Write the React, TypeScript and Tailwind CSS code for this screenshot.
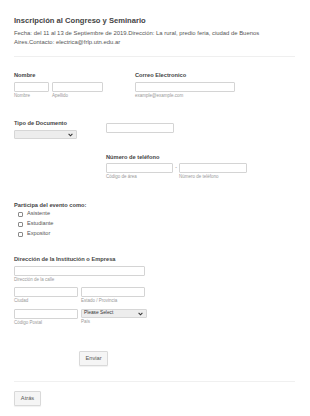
import React from 'react';

function Field({ w, h = 10 }: { w: number; h?: number }) {
  return (
    <div
      className="bg-white border border-[#d4d4d4] rounded-[1px] shrink-0"
      style={{ width: w, height: h }}
    />
  );
}

function Sub({ children }: { children: React.ReactNode }) {
  return <div className="mt-[1px] h-[6px] leading-[6px] text-[4.5px] text-[#999] whitespace-nowrap">{children}</div>;
}

function Label({ children }: { children: React.ReactNode }) {
  return <div className="h-[8px] leading-[8px] text-[5.7px] font-bold text-[#444] whitespace-nowrap">{children}</div>;
}

function Chevron() {
  return (
    <svg width="5" height="4" viewBox="0 0 5 4" className="shrink-0">
      <path d="M0.6 0.9 L2.5 2.8 L4.4 0.9" fill="none" stroke="#333" strokeWidth="1.1" />
    </svg>
  );
}

function SelectBox({ w, h, text }: { w: number; h: number; text?: string }) {
  return (
    <div
      className="flex items-center justify-between bg-[#ededed] border border-[#d6d6d6] rounded-[1px] pl-[2px] pr-[3px]"
      style={{ width: w, height: h }}
    >
      <span className="text-[4.8px] text-[#333] leading-none whitespace-nowrap">{text}</span>
      <Chevron />
    </div>
  );
}

function Check({ label }: { label: string }) {
  return (
    <div className="h-[10px] flex items-center pl-[4px] gap-[4px]">
      <div className="w-[5px] h-[5px] border border-[#8a8a8a] rounded-[1px] bg-white" />
      <span className="text-[5.6px] text-[#555] leading-none">{label}</span>
    </div>
  );
}

export default function App() {
  return (
    <div className="w-[310px] h-[416px] bg-white overflow-hidden font-['Liberation_Sans',Arial,sans-serif] px-[14px] pt-[16px] pr-[15px]">
      <h1 className="h-[10px] leading-[10px] text-[7.6px] font-bold text-[#444]">
        Inscripción al Congreso y Seminario
      </h1>
      <p className="mt-[3px] text-[5.9px] leading-[9px] text-[#555]">
        Fecha: del 11 al 13 de Septiembre de 2019.Dirección: La rural, predio feria, ciudad de Buenos Aires.Contacto: electrica@frlp.utn.edu.ar
      </p>
      <div className="mt-[9px] border-t border-[#efefef]" />

      {/* nombre + correo */}
      <div className="mt-[14px] flex">
        <div className="w-[121px]">
          <Label>Nombre</Label>
          <div className="mt-[3px] flex gap-[3px]">
            <div>
              <Field w={35} />
              <Sub>Nombre</Sub>
            </div>
            <div>
              <Field w={51} />
              <Sub>Apellido</Sub>
            </div>
          </div>
        </div>
        <div>
          <Label>Correo Electronico</Label>
          <div className="mt-[3px]">
            <Field w={100} />
            <Sub>example@example.com</Sub>
          </div>
        </div>
      </div>

      {/* documento + telefono */}
      <div className="mt-[20px] flex">
        <div className="w-[92px]">
          <Label>Tipo de Documento</Label>
          <div className="mt-[3px]">
            <SelectBox w={63} h={9} />
          </div>
        </div>
        <div className="pt-[4px]">
          <Field w={68} />
          <div className="mt-[20px]">
            <Label>Número de teléfono</Label>
            <div className="mt-[2px] flex items-start">
              <div>
                <Field w={67} />
                <Sub>Código de área</Sub>
              </div>
              <div className="w-[6px] h-[10px] flex items-center justify-center text-[5px] text-[#777]">-</div>
              <div>
                <Field w={68} />
                <Sub>Número de teléfono</Sub>
              </div>
            </div>
          </div>
        </div>
      </div>

      {/* participa */}
      <div className="mt-[21px]">
        <Label>Participa del evento como:</Label>
        <div>
          <Check label="Asistente" />
          <Check label="Estudiante" />
          <Check label="Expositor" />
        </div>
      </div>

      {/* direccion */}
      <div className="mt-[16px]">
        <Label>Dirección de la Institución o Empresa</Label>
        <div className="mt-[3px]">
          <Field w={131} />
          <Sub>Dirección de la calle</Sub>
        </div>
        <div className="mt-[4px] flex gap-[3px]">
          <div>
            <Field w={64} />
            <Sub>Ciudad</Sub>
          </div>
          <div>
            <Field w={64} />
            <Sub>Estado / Provincia</Sub>
          </div>
        </div>
        <div className="mt-[5px] flex gap-[3px] items-start">
          <div>
            <Field w={64} />
            <Sub>Código Postal</Sub>
          </div>
          <div>
            <SelectBox w={66} h={9} text="Please Select" />
            <Sub>País</Sub>
          </div>
        </div>
      </div>

      <div className="mt-[25px] pl-[65px] flex">
        <button className="w-[29px] h-[15px] bg-[#f5f5f5] border border-[#d9d9d9] rounded-[1px] shadow-[0_1px_1px_rgba(0,0,0,0.06)] text-[5.7px] text-[#555] leading-none">
          Enviar
        </button>
      </div>

      <div className="mt-[15px] border-t border-[#f0f0f0]" />

      <div className="mt-[9px] flex">
        <button className="w-[27px] h-[15px] bg-[#f5f5f5] border border-[#d9d9d9] rounded-[1px] shadow-[0_1px_1px_rgba(0,0,0,0.06)] text-[5.7px] text-[#555] leading-none">
          Atrás
        </button>
      </div>
    </div>
  );
}
